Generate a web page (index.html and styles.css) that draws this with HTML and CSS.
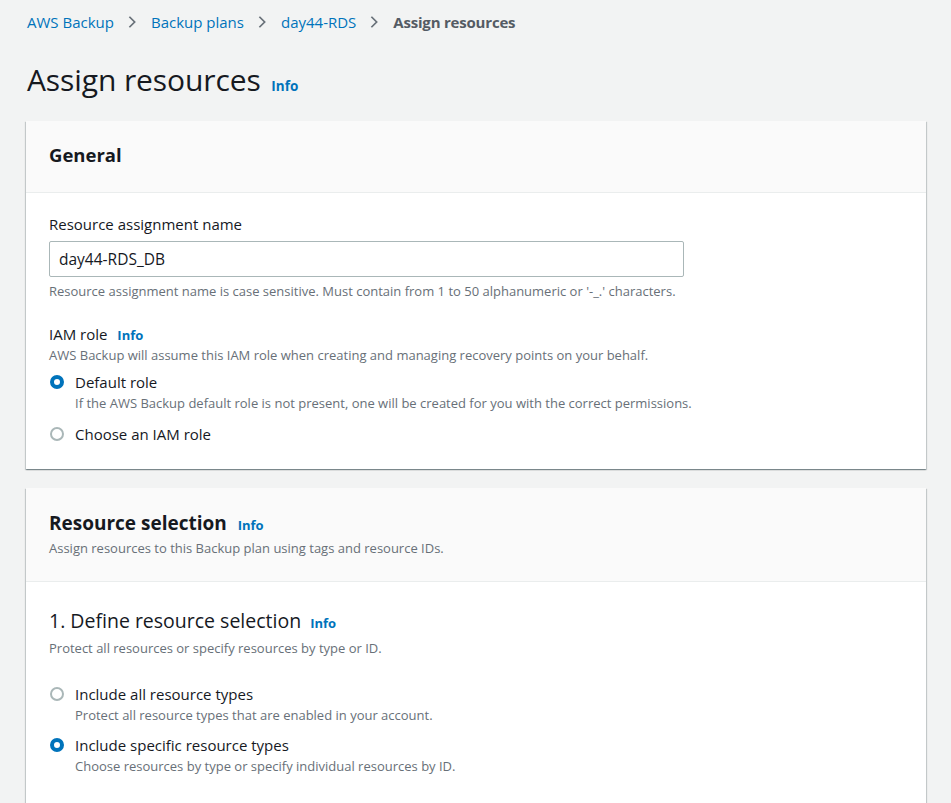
FILE: index.html
```html
<!DOCTYPE html>
<html>
<head>
<meta charset="utf-8">
<link rel="stylesheet" href="styles.css">
</head>
<body>
<div class="page">
  <nav class="crumbs">
    <a class="crumb">AWS Backup</a>
    <svg class="chev" viewBox="0 0 16 16"><path d="M5 2l6 6-6 6"/></svg>
    <a class="crumb">Backup plans</a>
    <svg class="chev" viewBox="0 0 16 16"><path d="M5 2l6 6-6 6"/></svg>
    <a class="crumb">day44-RDS</a>
    <svg class="chev" viewBox="0 0 16 16"><path d="M5 2l6 6-6 6"/></svg>
    <span class="crumb current">Assign resources</span>
  </nav>

  <h1 class="title">Assign resources <a class="info">Info</a></h1>

  <section class="card">
    <div class="card-head">
      <h2 class="card-title">General</h2>
    </div>
    <div class="card-body">
      <div class="field">
        <label class="label">Resource assignment name</label>
        <div class="input">day44-RDS_DB</div>
        <div class="hint">Resource assignment name is case sensitive. Must contain from 1 to 50 alphanumeric or '-_.' characters.</div>
      </div>
      <div class="field field-iam">
        <div class="label">IAM role <a class="info">Info</a></div>
        <div class="desc">AWS Backup will assume this IAM role when creating and managing recovery points on your behalf.</div>
        <div class="radios">
          <div class="radio">
            <span class="dot on"></span>
            <div>
              <div class="r-label">Default role</div>
              <div class="r-desc">If the AWS Backup default role is not present, one will be created for you with the correct permissions.</div>
            </div>
          </div>
          <div class="radio">
            <span class="dot"></span>
            <div><div class="r-label">Choose an IAM role</div></div>
          </div>
        </div>
      </div>
    </div>
  </section>

  <section class="card">
    <div class="card-head head2">
      <h2 class="card-title">Resource selection <a class="info">Info</a></h2>
      <div class="head-desc">Assign resources to this Backup plan using tags and resource IDs.</div>
    </div>
    <div class="card-body body2">
      <h3 class="sub-title">1. Define resource selection <a class="info">Info</a></h3>
      <div class="hint sub-desc">Protect all resources or specify resources by type or ID.</div>
      <div class="radios radios2">
        <div class="radio">
          <span class="dot"></span>
          <div>
            <div class="r-label">Include all resource types</div>
            <div class="r-desc">Protect all resource types that are enabled in your account.</div>
          </div>
        </div>
        <div class="radio">
          <span class="dot on"></span>
          <div>
            <div class="r-label">Include specific resource types</div>
            <div class="r-desc">Choose resources by type or specify individual resources by ID.</div>
          </div>
        </div>
      </div>
    </div>
  </section>
</div>
</body>
</html>
```
FILE: styles.css
```css
* { box-sizing: border-box; }
html, body { margin: 0; padding: 0; }
body {
  background: #f2f3f3;
  font-family: "Open Sans", "Noto Sans", sans-serif;
  color: #16191f;
  width: 951px;
  height: 803px;
  overflow: hidden;
}
.page {
  padding: 10px 25px 0 26px;
}
.crumbs {
  display: flex;
  align-items: center;
  font-size: 15px;
  height: 24px;
  padding-left: 1px;
}
.crumb { color: #0073bb; }
.crumb.current { color: #545b64; font-weight: 700; letter-spacing: -0.2px; }
.chev {
  width: 14px; height: 14px;
  margin: 0 12px 0 11px;
  fill: none; stroke: #687078; stroke-width: 2;
}
.title {
  margin: 26px 0 0 1px;
  font-size: 30px;
  font-weight: 400;
  line-height: 40px;
  letter-spacing: -0.1px;
}
.info {
  color: #0073bb;
  font-size: 13px;
  font-weight: 700;
  letter-spacing: 0;
  margin-left: 4px;
}
.title .info { font-size: 13.5px; margin-left: 3px; }
.card {
  background: #fff;
  margin-top: 15px;
  box-shadow: 0 1px 1px 0 rgba(0,28,36,.3), 1px 1px 1px 0 rgba(0,28,36,.15), -1px 1px 1px 0 rgba(0,28,36,.15);
}
.card + .card { margin-top: 19px; }
.card-head {
  background: #fafafa;
  border-bottom: 1px solid #eaeded;
  height: 72px;
  padding: 22px 22px 0 23px;
}
.card-title {
  margin: 0;
  font-size: 18.5px;
  font-weight: 700;
  line-height: 24px;
}
.head2 .card-title { font-size: 19px; }
.card-title .info { margin-left: 6px; font-size: 13px; }
.card-body {
  padding: 20px 22px 24px 23px;
}
.label {
  font-size: 15px;
  line-height: 22px;
}
.input {
  margin-top: 6px;
  width: 635px;
  height: 36px;
  border: 1px solid #aab7b8;
  border-radius: 2px;
  font-size: 15.5px;
  line-height: 34px;
  padding: 0 9px;
}
.hint {
  font-size: 13px;
  color: #687078;
  line-height: 18px;
  margin-top: 5px;
}
.field-iam { margin-top: 23px; }
.field-iam .label .info { margin-left: 6px; }
.desc {
  font-size: 13px;
  color: #687078;
  line-height: 18px;
}
.radios { margin-top: 7px; display: flex; flex-direction: column; gap: 10px; }
.radio { display: flex; align-items: flex-start; }
.dot {
  flex: none;
  width: 14px; height: 14px;
  border: 2px solid #aab7b8;
  border-radius: 50%;
  margin: 4px 11px 0 1px;
  background: #fff;
}
.dot.on {
  border: 4px solid #0073bb;
}
.r-label { font-size: 15px; line-height: 22px; }
.r-desc { font-size: 13px; color: #687078; line-height: 20px; }

.head2 { height: 94px; padding-top: 23px; }
.head-desc { font-size: 13px; color: #687078; line-height: 18px; margin-top: 2px; }
.body2 { padding-top: 27px; padding-bottom: 60px; }
.sub-title {
  margin: 0;
  font-size: 19.5px;
  font-weight: 400;
  line-height: 24px;
}
.sub-desc { margin-top: 4px; }
.radios2 { margin-top: 26px; gap: 9px; }
.radios2 .r-desc { padding-top: 1px; line-height: 19px; }
```
